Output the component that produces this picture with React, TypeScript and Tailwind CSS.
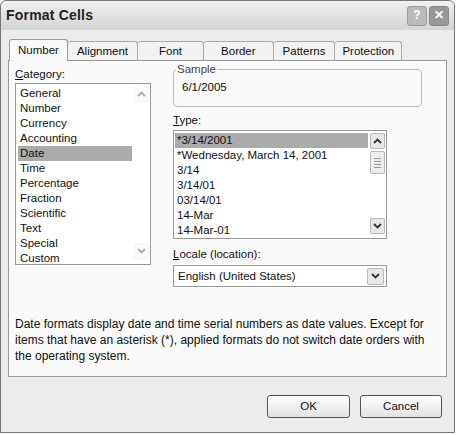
const cats = ["General","Number","Currency","Accounting","Date","Time","Percentage","Fraction","Scientific","Text","Special","Custom"];
const types = ["*3/14/2001","*Wednesday, March 14, 2001","3/14","3/14/01","03/14/01","14-Mar","14-Mar-01"];

function Arrow({ up }: { up?: boolean }) {
  return (
    <svg width="9" height="6" viewBox="0 0 9 6">
      <path d={up ? "M1 5 L4.5 1.5 L8 5" : "M1 1 L4.5 4.5 L8 1"} stroke="#333" strokeWidth="1.8" fill="none" />
    </svg>
  );
}

function SBtn({ up, faded }: { up?: boolean; faded?: boolean }) {
  return (
    <div className={`w-[15px] h-[16px] flex items-center justify-center rounded-[2px] border ${faded ? "border-[#e4e4e4] bg-[#f4f4f4] opacity-40" : "border-[#b8b8b8] bg-[#e8e8e8]"}`}>
      <Arrow up={up} />
    </div>
  );
}

export default function App() {
  return (
    <div className="w-[463px] h-[435px] bg-white text-[11.5px] text-[#111] leading-[15px]" style={{ fontFamily: '"Liberation Sans", Arial, sans-serif' }}>
      <div className="w-[455px] h-[433px] border border-[#777] rounded-t-[6px] bg-[#ececec] flex flex-col">
        <div className="h-[29px] flex items-center justify-between px-[5px] bg-gradient-to-b from-[#f0f0f0] to-[#d4d4d4] rounded-t-[6px]">
          <span className="font-bold text-[14px] tracking-[0.2px] text-[#222]">Format Cells</span>
          <div className="flex gap-[2px]">
            <div className="w-[20px] h-[20px] rounded-[3px] border border-[#999] bg-[#bbb] text-white font-bold text-[12px] flex items-center justify-center">?</div>
            <div className="w-[20px] h-[20px] rounded-[3px] border border-[#888] bg-[#999] text-white font-bold text-[12px] flex items-center justify-center">✕</div>
          </div>
        </div>
        <div className="px-[7px] pt-[8px] flex flex-col">
          <div className="flex items-end h-[22px] pl-[1px]">
            {["Number","Alignment","Font","Border","Patterns","Protection"].map((t, i) => (
              <div key={t} className={i === 0
                ? "h-[22px] px-[8px] border border-b-0 border-[#999] bg-[#fafafa] rounded-t-[3px] flex items-center relative z-10 -mb-px"
                : `h-[19px] ${["px-[9px]","px-[21px]","px-[17px]","px-[9px]","px-[7px]"][i-1]} border border-b-0 border-l-0 border-[#aaa] bg-[#f2f2f2] rounded-t-[3px] flex items-center`}>{t}</div>
            ))}
          </div>
          <div className="h-[317px] border border-[#999] bg-[#fafafa] flex flex-col px-[6px] pt-[4px]">
            <div className="flex">
              <div className="w-[136px] flex flex-col">
                <div className="mt-[2px]"><span className="underline">C</span>ategory:</div>
                <div className="mt-[1px] h-[182px] border border-[#999] bg-white flex pl-[2px] py-[2px]">
                  <div className="flex-1 flex flex-col">
                    {cats.map(c => <div key={c} className={`h-[15px] pl-[2px] ${c === "Date" ? "bg-[#ababab]" : ""}`}>{c}</div>)}
                  </div>
                  <div className="w-[18px] flex flex-col justify-between items-center pb-[3px]"><SBtn up faded /><SBtn faded /></div>
                </div>
              </div>
              <div className="ml-[22px] w-[249px] flex flex-col">
                <div className="relative h-[38px] border border-[#bbb] rounded-[4px] mt-[4px] px-[8px] pt-[10px]">
                  <span className="absolute -top-[8px] left-[2px] bg-[#fafafa] px-[1px] text-[#444]">Sample</span>
                  6/1/2005
                </div>
                <div className="mt-[6px]"><span className="underline">T</span>ype:</div>
                <div className="mt-[2px] w-[214px] h-[109px] border border-[#999] bg-white flex pl-[1px] py-[2px]">
                  <div className="flex-1 flex flex-col">
                    {types.map((t, i) => <div key={t} className={`h-[15px] pl-[2px] ${i === 0 ? "bg-[#ababab]" : ""}`}>{t}</div>)}
                  </div>
                  <div className="w-[18px] flex flex-col items-center pb-[2px]">
                    <SBtn up />
                    <div className="mt-[2px] w-[15px] h-[23px] border border-[#b8b8b8] bg-[#ececec] rounded-[2px] flex flex-col items-center justify-center gap-[2px]">
                      {[0,1,2,3].map(k => <div key={k} className="w-[7px] h-px bg-[#999]" />)}
                    </div>
                    <div className="flex-1" />
                    <SBtn />
                  </div>
                </div>
                <div className="mt-[8px]"><span className="underline">L</span>ocale (location):</div>
                <div className="mt-[3px] w-[214px] h-[22px] border border-[#999] bg-white flex items-center justify-between pl-[4px] pr-[2px]">
                  English (United States)
                  <div className="w-[17px] h-[17px] border border-[#b8b8b8] bg-[#e8e8e8] rounded-[2px] flex items-center justify-center"><Arrow /></div>
                </div>
              </div>
            </div>
            <p className="mt-[29px] text-[12px] leading-[16px] pr-[2px]">Date formats display date and time serial numbers as date values. Except for items that have an asterisk (*), applied formats do not switch date orders with the operating system.</p>
          </div>
        </div>
        <div className="flex justify-end gap-[10px] pr-[12px] mt-[18px]">
          <div className="w-[83px] h-[23px] border border-[#555] rounded-[3px] bg-gradient-to-b from-white to-[#e2e2e2] flex items-center justify-center">OK</div>
          <div className="w-[82px] h-[23px] border border-[#555] rounded-[3px] bg-gradient-to-b from-white to-[#e2e2e2] flex items-center justify-center">Cancel</div>
        </div>
      </div>
    </div>
  );
}
